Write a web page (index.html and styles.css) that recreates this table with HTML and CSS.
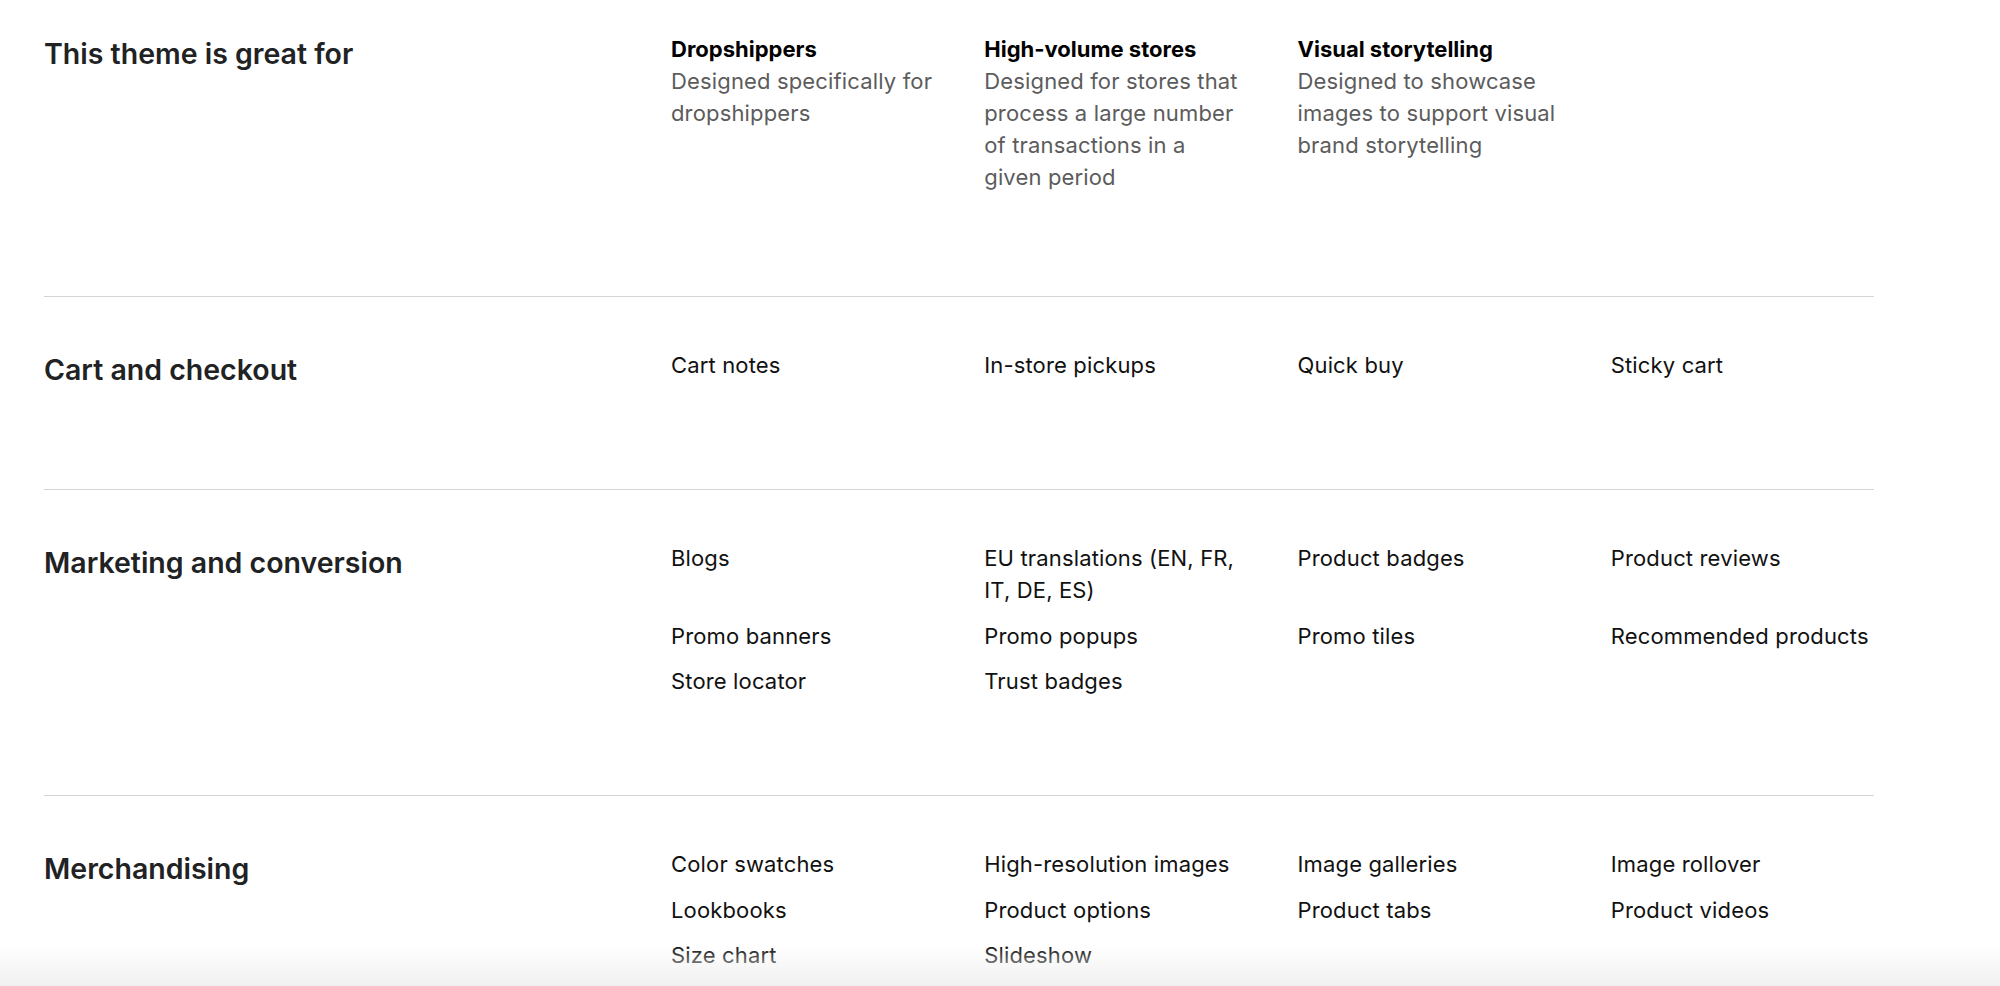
FILE: index.html
```html
<!DOCTYPE html>
<html lang="en">
<head>
    <meta charset="UTF-8">
    <meta name="viewport" content="width=device-width, initial-scale=1.0">
    <title>Theme features</title>
    <link rel="stylesheet" href="styles.css">
</head>
<body>

<div class="features">

    <div class="feature-section">
        <h2>This theme is great for</h2>
        <div class="feature-list">
            <div class="use-case">
                <h4>Dropshippers</h4>
                <p>Designed specifically for dropshippers</p>
            </div>
            <div class="use-case">
                <h4>High-volume stores</h4>
                <p>Designed for stores that process a large number of transactions in a given period</p>
            </div>
            <div class="use-case">
                <h4>Visual storytelling</h4>
                <p>Designed to showcase images to support visual brand storytelling</p>
            </div>
        </div>
    </div>

    <div class="feature-section">
        <h2>Cart and checkout</h2>
        <ul class="feature-list">
            <li>Cart notes</li>
            <li>In-store pickups</li>
            <li>Quick buy</li>
            <li>Sticky cart</li>
        </ul>
    </div>

    <div class="feature-section">
        <h2>Marketing and conversion</h2>
        <ul class="feature-list">
            <li>Blogs</li>
            <li>EU translations (EN, FR, IT, DE, ES)</li>
            <li>Product badges</li>
            <li>Product reviews</li>
            <li>Promo banners</li>
            <li>Promo popups</li>
            <li>Promo tiles</li>
            <li>Recommended products</li>
            <li>Store locator</li>
            <li>Trust badges</li>
        </ul>
    </div>

    <div class="feature-section">
        <h2>Merchandising</h2>
        <ul class="feature-list">
            <li>Color swatches</li>
            <li>High-resolution images</li>
            <li>Image galleries</li>
            <li>Image rollover</li>
            <li>Lookbooks</li>
            <li>Product options</li>
            <li>Product tabs</li>
            <li>Product videos</li>
            <li>Size chart</li>
            <li>Slideshow</li>
        </ul>
    </div>

</div>

<div class="bottom-fade"></div>

</body>
</html>
```

FILE: styles.css
```css
body {
    font-family: 'Inter', 'Noto Sans', sans-serif;
    margin: 0;
    background-color: #ffffff;
    color: #111111;
}

.features {
    width: 1830px;
    margin-left: 44px;
    padding-top: 33px;
}

.feature-section {
    display: grid;
    grid-template-columns: 577px 1fr;
    column-gap: 50px;
    padding: 52px 0 98px;
    border-top: 1px solid #d4d4d4;
}

.feature-section:first-child {
    padding: 0 0 103px;
    border-top: none;
}

.feature-section h2 {
    font-size: 28.5px;
    font-weight: 600;
    line-height: 42px;
    margin: 0;
    color: #202223;
}

.feature-list {
    display: grid;
    grid-template-columns: repeat(4, 1fr);
    column-gap: 50px;
    row-gap: 13.5px;
    list-style: none;
    margin: 0;
    padding: 0;
    align-content: start;
}

.feature-list li {
    font-size: 22px;
    line-height: 32px;
    letter-spacing: 0.15px;
}

.use-case h4 {
    font-size: 22px;
    font-weight: 700;
    line-height: 32px;
    margin: 0;
    color: #000000;
}

.use-case p {
    font-size: 22px;
    line-height: 32px;
    letter-spacing: 0.15px;
    margin: 0;
    color: #5c5c5c;
}

.bottom-fade {
    position: fixed;
    left: 0;
    right: 0;
    bottom: 0;
    height: 40px;
    background: linear-gradient(to bottom, rgba(240, 240, 240, 0), #f0f0f0);
}
```
